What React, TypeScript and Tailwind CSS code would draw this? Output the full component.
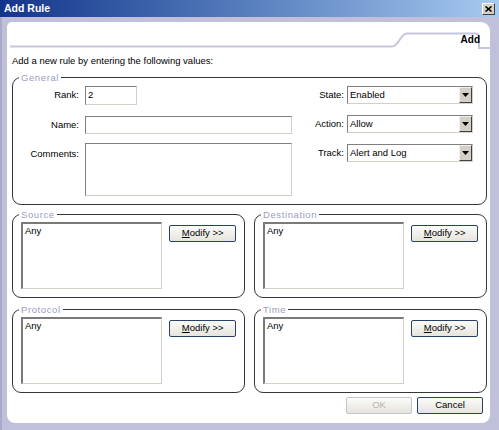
import React from "react";

const inset =
  "bg-white border border-t-[#7f7f7f] border-l-[#7f7f7f] border-r-[#d4d0c8] border-b-[#d4d0c8]";

function Group({
  label,
  className = "",
  children,
}: {
  label: string;
  className?: string;
  children: React.ReactNode;
}) {
  return (
    <fieldset className={`border border-[#363636] rounded-[9px] min-w-0 p-0 ${className}`}>
      <legend className="ml-[6px] px-[2px] text-[#9c9cc2] tracking-[0.6px] leading-[11px]">
        {label}
      </legend>
      {children}
    </fieldset>
  );
}

function Select({ value }: { value: string }) {
  return (
    <div className={`w-[126px] h-[18px] flex ${inset}`}>
      <div className="flex-1 pl-[2px] leading-[16px]">{value}</div>
      <div className="w-[13px] h-full bg-[#d4d0c8] border border-t-[#f0f0f0] border-l-[#f0f0f0] border-r-[#404040] border-b-[#404040] flex items-center justify-center">
        <svg width="7" height="4" viewBox="0 0 7 4">
          <path d="M0 0 H7 L3.5 4 Z" fill="#000" />
        </svg>
      </div>
    </div>
  );
}

function Btn({ children, disabled = false, className = "" }: { children: React.ReactNode; disabled?: boolean; className?: string }) {
  return (
    <div
      className={`h-[17px] rounded-[2px] border flex items-center justify-center bg-linear-to-b from-[#fbfbf9] to-[#e6e4dc] ${
        disabled ? "border-[#c2c6cc] text-[#b4b4b4]" : "border-[#27406c] text-black"
      } ${className}`}
    >
      {children}
    </div>
  );
}

function ListGroup({ label }: { label: string }) {
  return (
    <Group label={label}>
      <div className="flex items-start gap-[7px] pl-[8px] pr-[8px] pb-[8px] pt-[2px]">
        <div className="w-[142px] h-[67px] bg-white border-t-2 border-l-2 border-t-[#7a7a7a] border-l-[#7a7a7a] border-r border-b border-r-[#d4d0c8] border-b-[#d4d0c8] pl-[2px] pt-[1px] leading-[11px]">
          Any
        </div>
        <Btn className="w-[67px] mt-[3px]">
          <span>
            <span className="underline">M</span>odify &gt;&gt;
          </span>
        </Btn>
      </div>
    </Group>
  );
}

export default function App() {
  return (
    <div className="w-[499px] h-[430px] flex flex-col bg-[#c0c0da] font-['Liberation_Sans',Arial,sans-serif] text-[9.5px] text-black overflow-hidden">
      {/* title bar */}
      <div className="h-[17px] shrink-0 flex items-center justify-between pl-[4px] pr-[4px] bg-linear-to-r from-[#14348a] to-[#a6caf0]">
        <span className="text-white font-bold text-[10.5px] leading-none">Add Rule</span>
        <div className="w-[13px] h-[12px] bg-[#d4d0c8] border border-t-white border-l-white border-r-[#404040] border-b-[#404040] flex items-center justify-center">
          <svg width="7" height="6" viewBox="0 0 7 6">
            <path d="M0.5 0.5 L6.5 5.5 M6.5 0.5 L0.5 5.5" stroke="#000" strokeWidth="1.6" />
          </svg>
        </div>
      </div>

      {/* body */}
      <div className="flex-1 flex flex-col pt-[5px] pl-[5px] pr-[9px] pb-[7px] border-l-2 border-[#a9a9c8]">
        <div className="flex-1 flex flex-col bg-white rounded-tl-[5px] rounded-tr-[9px] rounded-bl-[8px] rounded-br-[8px] pl-[5px] pr-[3px]">
          {/* tab header */}
          <div className="relative h-[28px] -ml-[5px] -mr-[3px] flex justify-end pr-[10px] pt-[12px]">
            <svg className="absolute inset-0" width="483" height="28" viewBox="0 0 483 28">
              <path
                d="M3 24.5 H385 C392 24.5 393 11.5 400 11.5 H468 Q472 11.5 472 15.5 V26 H483"
                fill="none"
                stroke="#c6c6de"
                strokeWidth="2"
              />
            </svg>
            <span className="relative font-bold text-[10px] leading-[11px]">Add</span>
          </div>

          <div className="mt-[5px] leading-[11px]">Add a new rule by entering the following values:</div>

          {/* General */}
          <Group label="General" className="mt-[6px]">
            <div className="flex justify-between items-start pt-[3px] pb-[8px] pr-[13px]">
              <div className="grid grid-cols-[66px_207px] gap-x-[6px] items-center">
                <div className="text-right">Rank:</div>
                <div className={`w-[52px] h-[19px] ${inset} pl-[2px] leading-[16px]`}>2</div>
                <div className="text-right mt-[11px]">Name:</div>
                <div className={`h-[18px] mt-[11px] ${inset}`} />
                <div className="text-right self-start mt-[13px]">Comments:</div>
                <div className={`h-[53px] mt-[9px] ${inset}`} />
              </div>
              <div className="grid grid-cols-[auto_126px] gap-x-[3px] gap-y-[11px] items-center">
                <div className="text-right">State:</div>
                <Select value="Enabled" />
                <div className="text-right">Action:</div>
                <Select value="Allow" />
                <div className="text-right">Track:</div>
                <Select value="Alert and Log" />
              </div>
            </div>
          </Group>

          <div className="grid grid-cols-2 gap-x-[9px] gap-y-[6px] mt-[4px]">
            <ListGroup label="Source" />
            <ListGroup label="Destination" />
            <ListGroup label="Protocol" />
            <ListGroup label="Time" />
          </div>

          <div className="flex justify-end gap-[5px] mt-[4px] pr-[4px]">
            <Btn disabled className="w-[66px]">OK</Btn>
            <Btn className="w-[66px]">Cancel</Btn>
          </div>
        </div>
      </div>
    </div>
  );
}
